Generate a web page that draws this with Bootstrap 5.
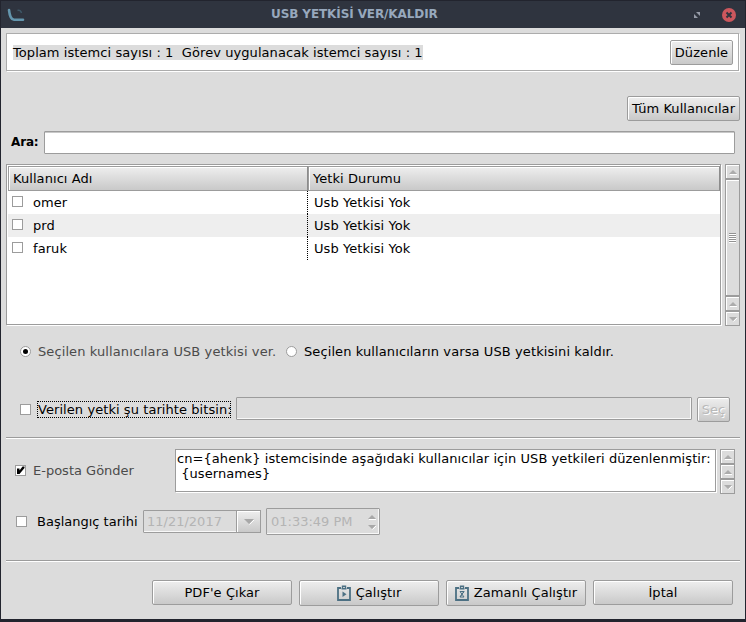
<!DOCTYPE html>
<html lang="tr">
<head>
<meta charset="utf-8">
<title>USB YETKİSİ VER/KALDIR</title>
<link href="https://cdn.jsdelivr.net/npm/bootstrap@5.3.0/dist/css/bootstrap.min.css" rel="stylesheet">
<style>
:root{--face:#dcdcdc;--edge:#9c9c9c}
body{font:13px/15px "DejaVu Sans",sans-serif;letter-spacing:.07px;color:#000;background:#22242e;overflow:hidden}
svg{display:block;flex:none}
.window{width:746px;height:622px;padding:0 1px 3px;background:#22242e}
.titlebar{height:28px;flex:none;background:#2f343f;border-top:1px solid #22242e;color:#97a8bd;font-size:12px;letter-spacing:-.1px;font-weight:bold;padding:0 9px 0 6px}
.title-logo{width:264px}
.title-controls{width:43px}
.content-pane{background:var(--face);padding:5px 5px 0;white-space:nowrap}
.sunken{border:1px solid var(--edge);box-shadow:1px 1px 0 #fff;background:#fff}
.summary{width:733px;height:38px;padding:0 5px 0 6px;border-color:#acacac}
.summary-text{background:var(--face);white-space:pre}
.btn.push{font:inherit;letter-spacing:inherit;color:#000;height:25px;padding:0 0 1px;border:1px solid var(--edge);border-radius:2px;background:linear-gradient(#eee,#c9c9c9);box-shadow:inset 1px 1px 0 #fff;white-space:nowrap;display:flex;align-items:center;justify-content:center;gap:5px}
.btn.push:disabled{opacity:1;color:#b9b9b9;text-shadow:1px 1px 0 #fff}
.w-edit{width:63px;margin-top:1px}.w-all{width:113px}.w-pick{width:33px}.w-action{width:140px}
.btn.push.with-icon{height:26px}
.all-row{margin-top:25px;height:25px}
.search-row{margin-top:10px;height:23px;padding-left:5px}
.search-row label{font-size:12px;letter-spacing:-.15px;font-weight:bold;width:33px;line-height:22px}
.field{border:1px solid var(--edge);border-radius:1px;height:23px;box-shadow:inset 0 1px 0 #c8c8c8;background:#fff}
.field.off{background:var(--face);box-shadow:inset -1px -1px 0 #f8f8f8;color:#b4b4b4}
.search-field{width:691px}
.table-row{margin-top:10px;height:162px}
.user-table{width:715px;height:161px;padding:1px 0 0 1px}
.headcell{height:25px;border:1px solid var(--edge);border-right-color:#8c8c8c;background:linear-gradient(#eee,#c9c9c9);box-shadow:inset 1px 1px 0 #fff;padding:4px 0 0 4px}
.name-col{width:300px;flex:none}
.state-col{width:412px}
.user-row{height:23px}
.user-row:nth-child(even){background:#eee}
.user-row .name-col{border-right:1px dotted #000;padding:4px 0 0 4px;height:23px}
.user-row .state-col{padding:4px 0 0 6px}
.tick{width:11px;height:11px;border:1px solid var(--edge);background:#fff;flex:none}
.user-row .tick{margin:1px 10px 0 0}
.sbar{width:15px;background:var(--face)}
.sbtn{height:15px;border:1px solid var(--edge);box-shadow:inset 1px 1px 0 #fff;display:flex;align-items:center;justify-content:center}
.sthumb{height:117px}
.grip{width:7px;height:10px;background:repeating-linear-gradient(#929292 0 1px,#fff 1px 2px)}
.radio-row{margin-top:18px;height:15px;padding-left:14px}
.choice{gap:7px}
.circle{width:11px;height:11px;border:1px solid var(--edge);border-radius:50%;background:#fff;flex:none;display:flex;align-items:center;justify-content:center}
.circle.on::after{content:"";width:5px;height:5px;border-radius:50%;background:#000}
.dim{color:#4b4b4b}
.first-choice{width:250px}
.radio-row{letter-spacing:.1px}
.expiry-row{margin-top:38px;height:25px;padding-left:14px}
.expiry-row .tick{margin-top:7px}
.focused{outline:1px dotted #000;outline-offset:-1px;width:194px;height:17px;padding:1px 0 0 1px;margin:4px 5px 0 6px}
.expiry-field{width:456px;margin-right:5px}
.rule{height:2px;flex:none;background:linear-gradient(var(--edge) 50%,#fff 50%);width:734px}
.mail-rule{margin-top:15px}
.action-rule{margin-top:25px}
.mail-row{margin-top:10px;height:44px;padding-left:9px}
.mail-check{width:160px;height:43px;gap:7px;letter-spacing:0}
.mail-text{width:541px;height:43px;padding:1px 0 0 1px;margin-right:4px;white-space:pre}
.start-row{margin-top:15px;height:27px;padding-left:10px;letter-spacing:0}
.start-label{width:116px;padding-left:10px;flex:none}
.date-field{width:118px;margin-right:5px;padding-left:3px}
.date-field .drop{width:25px;height:23px;margin:-1px;border:1px solid var(--edge);background:linear-gradient(#eee,#c9c9c9);box-shadow:inset 1px 1px 0 #fff}
.time-field{width:114px;height:27px;padding:0 3px 0 4px}
.actions{margin-top:18px;gap:7px;padding-left:146px}
</style>
</head>
<body>
<div class="window d-flex flex-column">
  <header class="titlebar d-flex align-items-center">
    <div class="title-logo"><svg width="18" height="14" viewBox="0 0 18 14" fill="none"><path d="M2 2Q3 11.500 7 11.800H16" stroke="#6496ae" stroke-width="2.600" stroke-linecap="round"/><path d="M10.500 2.500q3-1 4 2.500" stroke="#3e5868" stroke-width="1.400"/></svg></div>
    <div class="title-text">USB YETKİSİ VER/KALDIR</div>
    <div class="title-controls ms-auto d-flex align-items-center justify-content-between">
      <svg width="8" height="8" viewBox="0 0 8 8" fill="#969ba8"><path d="M3 1H7V5ZM1 3L5 7H1Z"/></svg>
      <svg width="14" height="14" viewBox="0 0 14 14"><circle cx="7" cy="7" r="7" fill="#cc575d"/><path d="M4.500 4.500l5 5m0-5l-5 5" stroke="#2f343f" stroke-width="2"/></svg>
    </div>
  </header>
  <main class="content-pane flex-grow-1 d-flex flex-column">
    <section class="summary sunken d-flex align-items-center justify-content-between"><span class="summary-text">Toplam istemci sayısı : 1  Görev uygulanacak istemci sayısı : 1</span><button class="btn push w-edit">Düzenle</button></section>
    <div class="all-row d-flex justify-content-end"><button class="btn push w-all">Tüm Kullanıcılar</button></div>
    <div class="search-row d-flex"><label>Ara:</label><div class="field search-field"></div></div>
    <section class="table-row d-flex gap-1">
      <div class="user-table sunken">
        <div class="d-flex"><div class="headcell name-col">Kullanıcı Adı</div><div class="headcell state-col">Yetki Durumu</div></div>
        <div class="user-list">
          <div class="user-row d-flex"><div class="name-col d-flex"><span class="tick"></span>omer</div><div class="state-col">Usb Yetkisi Yok</div></div>
          <div class="user-row d-flex"><div class="name-col d-flex"><span class="tick"></span>prd</div><div class="state-col">Usb Yetkisi Yok</div></div>
          <div class="user-row d-flex"><div class="name-col d-flex"><span class="tick"></span>faruk</div><div class="state-col">Usb Yetkisi Yok</div></div>
        </div>
      </div>
      <div class="sbar">
        <div class="sbtn"><svg width="8" height="6"><path d="M0 5L4 1 8 5Z" fill="#acacac"/><path d="M1 5.500H8" stroke="#fff"/></svg></div>
        <div class="sbtn sthumb"><div class="grip"></div></div>
        <div class="sbtn"><svg width="8" height="6"><path d="M0 5L4 1 8 5Z" fill="#acacac"/><path d="M1 5.500H8" stroke="#fff"/></svg></div>
        <div class="sbtn"><svg width="8" height="6"><path d="M0 1H8L4 5Z" fill="#acacac"/><path d="M4.500 5.500L8 2" stroke="#fff"/></svg></div>
      </div>
    </section>
    <div class="radio-row d-flex align-items-center">
      <div class="choice first-choice d-flex align-items-center dim"><span class="circle on"></span><span>Seçilen kullanıcılara USB yetkisi ver.</span></div>
      <div class="choice ms-3 d-flex align-items-center"><span class="circle"></span><span>Seçilen kullanıcıların varsa USB yetkisini kaldır.</span></div>
    </div>
    <div class="expiry-row d-flex"><span class="tick"></span><label class="focused">Verilen yetki şu tarihte bitsin:</label><div class="field off expiry-field"></div><button class="btn push w-pick" disabled>Seç</button></div>
    <div class="rule mail-rule"></div>
    <div class="mail-row d-flex">
      <div class="mail-check d-flex align-items-center dim"><span class="tick"><svg width="9" height="9" viewBox="0 0 9 9"><path d="M1 2.500V8H3.500L8.500 2V.5H6.500L3.500 4.500V2.500Z" fill="#000"/></svg></span><span>E-posta Gönder</span></div>
      <div class="mail-text sunken">cn={ahenk} istemcisinde aşağıdaki kullanıcılar için USB yetkileri düzenlenmiştir:
 {usernames}</div>
      <div class="sbar">
        <div class="sbtn"><svg width="8" height="6"><path d="M0 5L4 1 8 5Z" fill="#acacac"/><path d="M1 5.500H8" stroke="#fff"/></svg></div>
        <div class="sbtn"><svg width="8" height="6"><path d="M0 5L4 1 8 5Z" fill="#acacac"/><path d="M1 5.500H8" stroke="#fff"/></svg></div>
        <div class="sbtn"><svg width="8" height="6"><path d="M0 1H8L4 5Z" fill="#acacac"/><path d="M4.500 5.500L8 2" stroke="#fff"/></svg></div>
      </div>
    </div>
    <div class="start-row d-flex align-items-center"><span class="tick"></span><label class="start-label">Başlangıç tarihi</label>
      <div class="field off date-field d-flex align-items-center justify-content-between"><span>11/21/2017</span><span class="drop d-flex align-items-center justify-content-center"><svg width="10" height="7"><path d="M0 1H10L5 6Z" fill="#a8a8a8"/><path d="M5.500 6.500L10 2" stroke="#fff"/></svg></span></div>
      <div class="field off time-field d-flex align-items-center justify-content-between"><span>01:33:49 PM</span><svg width="8" height="20"><path d="M0 7L4 3 8 7ZM0 13H8L4 17Z" fill="#a8a8a8"/><path d="M1 7.500H8M4.500 17.500L8 14" stroke="#fff"/></svg></div>
    </div>
    <div class="rule action-rule"></div>
    <div class="actions d-flex">
      <button class="btn push w-action">PDF'e Çıkar</button>
      <button class="btn push with-icon w-action"><svg width="14" height="16" viewBox="0 0 14 16" fill="none" stroke="#4c7083"><path d="M4 3H1V15H13V3H10" stroke-width="1.800"/><path d="M4.500 3.800H9.500M5.500 3V1.200H8.500V3" stroke-width="1.400"/><path d="M5.500 6.500V12L9.500 9.250Z" fill="#4c7083" stroke="none"/></svg>Çalıştır</button>
      <button class="btn push with-icon w-action"><svg width="14" height="16" viewBox="0 0 14 16" fill="none" stroke="#4c7083"><path d="M4 3H1V15H13V3H10" stroke-width="1.800"/><path d="M4.500 3.800H9.500M5.500 3V1.200H8.500V3" stroke-width="1.400"/><path d="M5 6.500H9L5 12H9L5 6.500M9 6.500L5 12" stroke-width="1"/></svg>Zamanlı Çalıştır</button>
      <button class="btn push w-action">İptal</button>
    </div>
  </main>
</div>
<script src="https://cdn.jsdelivr.net/npm/bootstrap@5.3.0/dist/js/bootstrap.bundle.min.js"></script>
</body>
</html>
